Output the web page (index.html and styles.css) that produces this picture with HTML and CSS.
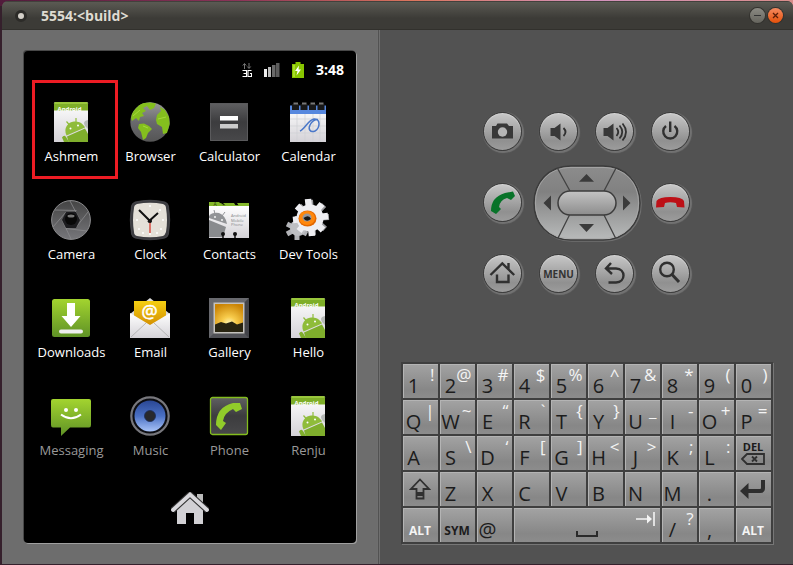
FILE: index.html
```html
<!DOCTYPE html>
<html lang="en">
<head>
<meta charset="utf-8">
<title>5554:&lt;build&gt;</title>
<link rel="stylesheet" href="styles.css">
</head>
<body>
<svg class="defs" aria-hidden="true">
  <defs>
    <linearGradient id="green" x1="0" y1="0" x2="0" y2="1"><stop offset="0" stop-color="#a3d42f"/><stop offset="1" stop-color="#5f9226"/></linearGradient>
    <linearGradient id="paper" x1="0" y1="0" x2="0" y2="1"><stop offset="0" stop-color="#fff"/><stop offset="1" stop-color="#d4d2d7"/></linearGradient>
    <linearGradient id="dark" x1="0" y1="0" x2="0" y2="1"><stop offset="0" stop-color="#606062"/><stop offset=".5" stop-color="#3c3c3e"/><stop offset="1" stop-color="#48484a"/></linearGradient>
    <linearGradient id="globe" x1="0" y1="0" x2="0" y2="1"><stop offset="0" stop-color="#999"/><stop offset=".5" stop-color="#69696d"/><stop offset="1" stop-color="#555"/></linearGradient>
    <linearGradient id="lens" x1="0" y1="0" x2="0" y2="1"><stop offset="0" stop-color="#444"/><stop offset="1" stop-color="#77777b"/></linearGradient>
    <linearGradient id="gold" x1="0" y1="0" x2="0" y2="1"><stop offset="0" stop-color="#f5cf12"/><stop offset="1" stop-color="#d18b00"/></linearGradient>
    <radialGradient id="sunset" cx=".5" cy=".72" r=".75"><stop offset="0" stop-color="#fffbc0"/><stop offset=".35" stop-color="#f8cc4c"/><stop offset="1" stop-color="#c98304"/></radialGradient>
    <linearGradient id="cone" x1="0" y1="0" x2="0" y2="1"><stop offset="0" stop-color="#2a4794"/><stop offset=".5" stop-color="#4a70c4"/><stop offset="1" stop-color="#a9c4f8"/></linearGradient>
    <linearGradient id="pad" x1="0" y1="0" x2="0" y2="1"><stop offset="0" stop-color="#8c8c8c"/><stop offset=".35" stop-color="#818181"/><stop offset="1" stop-color="#b9bbbb"/></linearGradient>
    <linearGradient id="pill" x1="0" y1="0" x2="0" y2="1"><stop offset="0" stop-color="#c4c4c4"/><stop offset="1" stop-color="#8c8c8c"/></linearGradient>
    <symbol id="doc" viewBox="0 0 40 40">
      <path d="M3 1.500Q3 0 4.500 0H35.500Q37 0 37 1.500V40H3Z" fill="url(#paper)"/>
      <path d="M3 1.500Q3 0 4.500 0H35.500Q37 0 37 1.500V8.500H3Z" fill="#7eae28"/>
      <path d="M4 1H36" stroke="#b4df50"/>
      <text x="6.500" y="8.500" font-size="6" font-weight="700" fill="#fff">Android</text>
      <path d="M37 18Q31 19 34 24L37 27Z" fill="#b6b9b6"/>
      <path d="M15.500 33.500C12 26 17 20 23 19.500C29 19 32 22 34 25.500Z" fill="#8fbc3a"/>
      <path d="M18.500 23L15.500 19.500M25 21V16" stroke="#8fbc3a" stroke-width="1.200"/>
      <circle cx="19.500" cy="26.500" r="1" fill="#fff"/><circle cx="27" cy="23.500" r="1" fill="#fff"/>
      <path d="M16 34.500L34 26.500L37 32V40H17.500Z" fill="#7fae2c"/>
      <path d="M11 35.500Q13 32.500 15 35L18 40H13Z" fill="#7fae2c"/>
    </symbol>
  </defs>
</svg>

<main class="window">
  <header class="titlebar">
    <span class="dot"></span>
    <h1 class="title">5554:&lt;build&gt;</h1>
    <div class="controls">
      <button class="control" aria-label="Minimize"><svg viewBox="0 0 15 15"><path d="M4 7.500H11" stroke="#333"/></svg></button>
      <button class="control close" aria-label="Close"><svg viewBox="0 0 15 15"><path d="M5 5L10 10M10 5L5 10" stroke="#5a1d08" stroke-width="1.300"/></svg></button>
    </div>
  </header>

  <div class="emulator">
    <section class="device" aria-label="Device">
      <div class="screen">
        <div class="status">
          <svg width="10" height="16" viewBox="0 0 10 16" aria-label="3G network"><path d="M2.500 7V2M.8 3.500L2.500 1.500L4.200 3.500M7 1V6M5.300 4.500L7 6.500L8.700 4.500" stroke="#777" fill="none"/><path d="M.5 8.500H4.500V14.500H.5M1.500 11.500H4.500M9.500 8.500H6V14.500H9.500V11.500H8" stroke="#fff" fill="none" stroke-width="1.100"/></svg>
          <svg width="16" height="16" viewBox="0 0 16 16" aria-label="Signal"><path d="M0 7H3V15H0Z" fill="#eee"/><path d="M4 5H7V15H4Z" fill="#bbb"/><path d="M8 3H11.500V15H8Z" fill="#6a6a6a"/><path d="M12 1H15.500V15H12Z" fill="#5c5c5c"/></svg>
          <svg width="12" height="16" viewBox="0 0 12 16" aria-label="Charging"><path d="M3.500 0H8.500V2H12V16H0V2H3.500Z" fill="#88c500"/><path d="M1 3H3V15H1Z" fill="#a7dd28"/><path d="M7 3.500L3 9H5.500L4.500 13.500L9 7.500H6.500Z" fill="#fff"/></svg>
          <time class="clock">3:48</time>
        </div>

        <nav class="apps" aria-label="Applications">
          <button class="app marked"><svg viewBox="0 0 40 40"><use href="#doc"/></svg>Ashmem</button>
          <button class="app"><svg viewBox="0 0 40 40"><circle cx="20" cy="20" r="19.700" fill="url(#globe)"/><path d="M2 12C5 6 10 2 14 1L20 .5L26 1.500L24 6L20 8L17 4L13 6L16 9L12 11L14 14L10 15L9 19L6 16L2 19L1 16ZM9 22L14 21.500L19 24L22 27L18 31L16 36L13 38L11 30L8 26ZM27 13L31 9L30 5L35 8L39 15L39.700 22L37 31L33 32L32 25L27 22L26 18Z" fill="#84bf1e"/><path d="M3 14L10 8M28 17L36 15M13 24L18 26" stroke="#a4da3a" stroke-width="1"/></svg>Browser</button>
          <button class="app"><svg viewBox="0 0 40 40"><path d="M1 1H39V39H1Z" fill="url(#dark)"/><path d="M1.500 1.500H38.500V38.500H1.500Z" fill="none" stroke="#5a5a5c"/><path d="M11 14H29V18.500H11Z" fill="#fff"/><path d="M11 22H29V26.500H11Z" fill="#ccc"/></svg>Calculator</button>
          <button class="app"><svg viewBox="0 0 40 40"><path d="M2 4H38V40H2Z" fill="url(#paper)"/><path d="M2 17H38M2 24H38M2 31H38M9 12V40M17 12V40M25 12V40M32 12V40" stroke="#cfd0d4" stroke-width=".7"/><path d="M2 3.500H38V12H2Z" fill="#5788de"/><path d="M4 2H11V8H4ZM12.500 2H19.500V8H12.500ZM21 2H28V8H21ZM29.500 2H36.500V8H29.500Z" fill="#181818"/><path d="M5.500 1.500H10M14 1.500H18.500M22.500 1.500H27M31 1.500H35.500" stroke="#777" stroke-width="2"/><path d="M12 29C17 27 20 18 26 17C33 16.500 32 26 27 29C22 31 20 27 22 23C23.500 20 26 17.500 30 17.500" fill="none" stroke="#4b78c9" stroke-width="1.500"/></svg>Calendar</button>

          <button class="app"><svg viewBox="0 0 40 40"><circle cx="20" cy="20" r="19.400" fill="url(#lens)" stroke="#8b8b8d"/><path d="M25.500 10.500L4 10M29 20L19 1M24.500 28L37 12M15 28.500L36 31M11 20L20 39M15 12L2 27" stroke="#8a8a8d" stroke-width=".8"/><path d="M15 12H25L29 20L25 28H15L11 20Z" fill="#1c1c1f"/><circle cx="20" cy="19" r="6" fill="#080808"/><ellipse cx="20" cy="16" rx="3.500" ry="1.500" fill="#777"/></svg>Camera</button>
          <button class="app"><svg viewBox="0 0 40 40"><path d="M5 2Q20-1.500 35 2Q38 3 38.500 6Q41 20 38.500 34Q38 37 35 38Q20 41.500 5 38Q2 37 1.500 34Q-1 20 1.500 6Q2 3 5 2Z" fill="#3c3c40" stroke="#58585c" stroke-width=".6"/><path d="M7 4Q20 1.500 33 4Q36 5 36 8Q38 20 36 32Q35 35 33 36Q20 38.500 7 36Q4 35 4 32Q2 20 4 8Q4 5 7 4Z" fill="#e4e0d8"/><g fill="#fff"><circle cx="20" cy="6" r="1"/><circle cx="33" cy="20" r="1"/><circle cx="7" cy="20" r="1"/><circle cx="20" cy="34" r="1"/><circle cx="30" cy="10" r="1"/><circle cx="31" cy="29" r="1"/><circle cx="9" cy="29" r="1"/><circle cx="13" cy="33" r="1"/><circle cx="27" cy="33" r="1"/></g><path d="M20 20V33" stroke="#d73c31" stroke-width="1.300"/><path d="M9 10L21 22M18 22L28 13" stroke="#111" stroke-width="2"/><circle cx="20" cy="21" r="2" fill="#111"/></svg>Clock</button>
          <button class="app"><svg viewBox="0 0 40 40"><path d="M0 3H12L15 5H40V12H0Z" fill="#6f9d22"/><path d="M0 2H10L14 6H0ZM14 3H25L27 6H17ZM28 3H40V6H30Z" fill="#84b82a"/><text x="4.500" y="6" font-size="5" fill="#26380c">A</text><path d="M0 6H40V38H0Z" fill="url(#paper)"/><path d="M0 16Q3 12 10 13Q17 16 18 24L0 18Z" fill="#929497"/><path d="M6 14L5 10M13 16L16 12" stroke="#929497"/><circle cx="6" cy="17" r=".9" fill="#fff"/><circle cx="13" cy="20" r=".9" fill="#fff"/><path d="M0 20L17 27L14 37H0Z" fill="#898b8e"/><g font-size="4" fill="#85868a"><text x="22" y="17">Android</text><text x="22" y="21.500">Mobile</text><text x="22" y="26">Phone</text></g><circle cx="14" cy="34" r="2" fill="#111"/><circle cx="26" cy="34" r="2" fill="#111"/><path d="M14 34V38M26 34V38" stroke="#111" stroke-width="1.500"/></svg>Contacts</button>
          <button class="app"><svg viewBox="0 0 40 40"><g stroke="#b2b3b7" stroke-width="5"><path d="M9 18V40M-1 24L19 34M-1 34L19 23"/></g><circle cx="10" cy="28" r="8" fill="#bebfc3"/><g stroke="#9a9b9f" stroke-width="6"><path d="M22 0L25 35M7 19L41 17M11 6L37 29M12 30L36 5"/></g><g stroke="#eeeef2" stroke-width="6.500"><path d="M20-1L24 36M5 20L40 16M9 6L35 30M11 31L34 4"/></g><circle cx="22" cy="18" r="13.500" fill="#eeeef2"/><ellipse cx="19.500" cy="18.500" rx="9" ry="8" fill="#e26700"/><ellipse cx="19" cy="18" rx="8" ry="7" fill="#ff870c"/><ellipse cx="19" cy="17.500" rx="4.500" ry="4" fill="#96979c"/><path d="M15.500 18Q21 14 23 19Q18 23 15.500 18Z" fill="#171717"/></svg>Dev Tools</button>

          <button class="app"><svg viewBox="0 0 40 40"><rect x="1" y="1" width="38" height="38" rx="2.500" fill="url(#green)"/><path d="M16 5H24V18H29.500L20 29L10.500 18H16Z" fill="#fff"/><rect x="8" y="31.500" width="24" height="4" rx="2" fill="#eee"/></svg>Downloads</button>
          <button class="app"><svg viewBox="0 0 40 40"><path d="M0 16L20 0L40 16V40H0Z" fill="#ddd"/><path d="M4 3H36V18L20 29L4 18Z" fill="url(#gold)"/><text x="11.500" y="20" font-size="18" fill="#fff" stroke="#fff" stroke-width=".5">@</text><path d="M0 15L20 27L40 15V40H0Z" fill="url(#paper)"/><path d="M1 39L16 25M39 39L24 25" stroke="#aaa" stroke-width=".8"/></svg>Email</button>
          <button class="app"><svg viewBox="0 0 40 40"><path d="M0 0H40V40H0Z" fill="#515257"/><path d="M0 0H40L35 5H5L5 35L0 40Z" fill="#68696e"/><path d="M40 0V40L35 35V5Z" fill="#424348"/><path d="M4.500 4.500H35.500V35.500H4.500Z" fill="#c4c2bd"/><path d="M6 6H34V34H6Z" fill="url(#sunset)"/><path d="M6 26.500L12 24L17 25.500L23 23.500L28 26.500L34 24.500V34H6Z" fill="#282411"/></svg>Gallery</button>
          <button class="app"><svg viewBox="0 0 40 40"><use href="#doc"/></svg>Hello</button>

          <button class="app faded"><svg viewBox="0 0 40 40"><path d="M2 3H38Q40 3 40 5V29Q40 31.500 38 31.500H19L10 40V31.500H2Q0 31.500 0 29V5Q0 3 2 3Z" fill="url(#green)"/><circle cx="15" cy="14" r="2" fill="#fff"/><circle cx="25" cy="14" r="2" fill="#fff"/><path d="M10 18.500Q20 26 30 18.500" fill="none" stroke="#fff" stroke-width="2"/></svg>Messaging</button>
          <button class="app faded"><svg viewBox="0 0 40 40"><circle cx="20" cy="20" r="18.700" fill="#0c0d12" stroke="#77777c" stroke-width="2.200"/><circle cx="20" cy="20" r="15.500" fill="url(#cone)"/><circle cx="20" cy="20" r="5.500" fill="#28292d" stroke="#1b2c58" stroke-width=".8"/></svg>Music</button>
          <button class="app faded"><svg viewBox="0 0 40 40"><rect x="1.500" y="1.500" width="37" height="37" rx="2" fill="url(#dark)" stroke="#83bd1e" stroke-width="1.300"/><path d="M24 7L31 7L33 13L27 16L24 13Q15 17 14 25L17 27L12 34L7 29Q7 11 24 7Z" fill="#91cb2a"/></svg>Phone</button>
          <button class="app faded"><svg viewBox="0 0 40 40"><use href="#doc"/></svg>Renju</button>
        </nav>

        <button class="home" aria-label="Home"><svg width="38" height="33" viewBox="0 0 38 33"><path d="M26 2H32V12H26Z" fill="#bbb"/><path d="M6 17L19 5L32 17V32H23V21H15V32H6Z" fill="#d1d0d4"/><path d="M1.500 18.500L19 2.500L36.500 18.500" fill="none" stroke="#333" stroke-width="6"/><path d="M2 18L19 2.500L36 18" fill="none" stroke="#d9d8dc" stroke-width="3.800" stroke-linecap="round"/></svg></button>
      </div>
    </section>

    <section class="input" aria-label="Controls">
      <div class="hardware">
        <button class="round" aria-label="Camera"><svg viewBox="0 0 39 39"><path d="M9 14H13L14.500 11.500H24L26 14H30V26.500H9Z" fill="#383838"/><circle cx="19.500" cy="20" r="4.700" fill="#b5b5b5"/></svg></button>
        <button class="round" aria-label="Volume down"><svg viewBox="0 0 39 39"><path d="M11.500 16H15.500L21.500 11.500V28.500L15.500 24H11.500Z" fill="#383838"/><path d="M24.500 16Q28.500 20 24.500 24" class="line"/></svg></button>
        <button class="round" aria-label="Volume up"><svg viewBox="0 0 39 39"><path d="M8.500 16H12.500L18.500 11.500V28.500L12.500 24H8.500Z" fill="#383838"/><path d="M21.500 16Q25 20 21.500 24M24.500 13.500Q30 20 24.500 26.500M27.500 11.500Q34.500 20 27.500 28.500" class="line"/></svg></button>
        <button class="round" aria-label="Power"><svg viewBox="0 0 39 39"><path d="M15 14A7 7 0 1 0 23.500 14M19.200 9.500V20" class="line thick"/></svg></button>

        <button class="round" aria-label="Call"><svg viewBox="0 0 39 39"><path d="M22 10L30 8.500L32 13L28 17L24 15Q17 17 16 24L18 26L13 31L8 28Q8 14 22 10Z" fill="#087329"/></svg></button>
        <div class="dpad" role="group" aria-label="Directional pad">
          <svg class="dpad-base" viewBox="0 0 108 76" aria-hidden="true"><path d="M38 1H70C93 1 107 18 107 38S93 75 70 75H38C15 75 1 58 1 38S15 1 38 1Z" fill="url(#pad)" stroke="#3b3b3b" stroke-width="1.500"/><path d="M38 2.500H70C92 2.500 105.500 18 105.500 38S92 73.500 70 73.500H38C16 73.500 2.500 58 2.500 38S16 2.500 38 2.500Z" fill="none" stroke="#aaa" stroke-width=".8"/><path d="M24.300 3L37 26M83 3L71 26M36.500 50L25 73M71 50L82.500 73" stroke="#424242" stroke-width="1.300"/><rect x="25" y="26" width="58" height="24" rx="12" fill="url(#pill)" stroke="#3c3c3c" stroke-width="1.500"/><path d="M46 16.700L53.500 9L61 16.700ZM46 59H61L53.500 67ZM10.500 38L18 30.500V45.500ZM90 30.500V45.500L97.500 38Z" fill="#3b3b3b"/></svg>
          <button class="up" aria-label="Up"></button><button class="left" aria-label="Left"></button><button class="ok" aria-label="Select"></button><button class="right" aria-label="Right"></button><button class="down" aria-label="Down"></button>
        </div>
        <button class="round" aria-label="End call"><svg viewBox="0 0 39 39"><path d="M5 24.500L5.500 18Q8 14 19.500 14Q31 14 33 18L33.500 24.500L26 24L25 20Q19 18.500 14 20L13 24Z" fill="#bd1017"/></svg></button>

        <button class="round" aria-label="Home"><svg viewBox="0 0 39 39"><path d="M7.500 21L19.300 9.500L31.200 21M25.500 9V15M14 20.500V28H25.500V20.500" class="line thick"/></svg></button>
        <button class="round">MENU</button>
        <button class="round" aria-label="Back"><svg viewBox="0 0 39 39"><path d="M16 9L11 14.500L17 20M11.500 14.500H21C31 15 31 28 21 28.500H13.500" class="line thick"/></svg></button>
        <button class="round" aria-label="Search"><svg viewBox="0 0 39 39"><circle cx="16" cy="15.500" r="6.800" class="line thick"/><path d="M21 20.500L28 28" class="line heavy"/></svg></button>
      </div>

      <div class="keyboard">
        <button class="key"><b>1</b><i>!</i></button><button class="key"><b>2</b><i>@</i></button><button class="key"><b>3</b><i>#</i></button><button class="key"><b>4</b><i>$</i></button><button class="key"><b>5</b><i>%</i></button><button class="key"><b>6</b><i>^</i></button><button class="key"><b>7</b><i>&amp;</i></button><button class="key"><b>8</b><i>*</i></button><button class="key"><b>9</b><i>(</i></button><button class="key"><b>0</b><i>)</i></button>
        <button class="key"><b>Q</b><i>|</i></button><button class="key"><b>W</b><i>~</i></button><button class="key"><b>E</b><i>“</i></button><button class="key"><b>R</b><i>`</i></button><button class="key"><b>T</b><i>{</i></button><button class="key"><b>Y</b><i>}</i></button><button class="key"><b>U</b><i>_</i></button><button class="key"><b>I</b><i>-</i></button><button class="key"><b>O</b><i>+</i></button><button class="key"><b>P</b><i>=</i></button>
        <button class="key"><b>A</b></button><button class="key"><b>S</b><i>\</i></button><button class="key"><b>D</b><i>‘</i></button><button class="key"><b>F</b><i>[</i></button><button class="key"><b>G</b><i>]</i></button><button class="key"><b>H</b><i>&lt;</i></button><button class="key"><b>J</b><i>&gt;</i></button><button class="key"><b>K</b><i>;</i></button><button class="key"><b>L</b><i>:</i></button>
        <button class="key delete">DEL<svg width="24" height="12" viewBox="0 0 24 12"><path d="M1 6L6 1H23V11H6Z" class="line"/><path d="M11 3.500L16 8.500M16 3.500L11 8.500" class="line"/></svg></button>
        <button class="key icon" aria-label="Shift"><svg width="22" height="22" viewBox="0 0 22 22"><path d="M11 1.500L20 11H14.500V15H7.500V11H2ZM7.500 17H14.500V20.500H7.500Z" class="line"/></svg></button>
        <button class="key"><b>Z</b></button><button class="key"><b>X</b></button><button class="key"><b>C</b></button><button class="key"><b>V</b></button><button class="key"><b>B</b></button><button class="key"><b>N</b></button><button class="key"><b>M</b></button><button class="key"><b>.</b></button>
        <button class="key icon" aria-label="Enter"><svg width="26" height="20" viewBox="0 0 26 20"><path d="M7 12H20Q23 12 23 9V1" fill="none" stroke="#2e2e2e" stroke-width="4"/><path d="M0 12L8.500 4V20Z" fill="#2e2e2e"/></svg></button>
        <button class="key word light">ALT</button><button class="key word">SYM</button><button class="key"><b>@</b></button>
        <button class="key space" aria-label="Space"><svg class="bar" width="22" height="6" viewBox="0 0 22 6"><path d="M1 0V5H21V0" fill="none" stroke="#2a2a2a" stroke-width="2"/></svg><svg class="tab" width="19" height="14" viewBox="0 0 19 14"><path d="M0 7H14M18 0V14" stroke="#f4f4f4" stroke-width="1.600"/><path d="M11 2.500L16 7L11 11.500Z" fill="#f4f4f4"/></svg></button>
        <button class="key"><b>/</b><i>?</i></button><button class="key"><b>,</b></button><button class="key word light">ALT</button>
      </div>
    </section>
  </div>
</main>
</body>
</html>
```
FILE: styles.css
```css
* { box-sizing: border-box; }

body {
  margin: 0;
  min-height: 100vh;
  display: flex;
  padding: 1px 0 1px 2px;
  background: linear-gradient(90deg, #511b3b, #8b3458 30%, #dc765d 52%, #d393bd 75%, #d98d8a) top / 100% 6px no-repeat, #35202c;
  font-family: "Open Sans", "Noto Sans", sans-serif;
}

button {
  margin: 0;
  padding: 0;
  border: 0;
  background: none;
  color: inherit;
  font: inherit;
}

svg { display: block; }

.defs {
  position: absolute;
  width: 0;
  height: 0;
}

.window {
  flex: 1;
  display: flex;
  flex-direction: column;
  border-radius: 6px 6px 0 0;
  overflow: hidden;
  background: #525252;
}

/* Title bar */
.titlebar {
  height: 29px;
  display: flex;
  align-items: center;
  gap: 14px;
  padding: 0 10px 0 13px;
  background: linear-gradient(#5b5a53, #3c3b37 60%);
  border-top: 1px solid #42413c;
  border-bottom: 1px solid #32312d;
}

.dot {
  width: 12px;
  height: 12px;
  border: 3px solid #2c2b28;
  border-radius: 50%;
  background: #d4d0c9;
}

.title {
  flex: 1;
  margin: 0;
  color: #dfdbd2;
  font-size: 14px;
  line-height: 20px;
}

.controls {
  display: flex;
  gap: 3px;
}

.control {
  width: 15px;
  height: 15px;
  border-radius: 50%;
  background: linear-gradient(#8b8a83, #65645d);
  box-shadow: 0 0 0 1px #33322e;
}

.control.close { background: linear-gradient(#f58a61, #e55009); }

.emulator {
  flex: 1;
  display: grid;
  grid-template-columns: 375fr 416fr;
}

/* Phone screen */
.device {
  padding: 21px 21px 20px 22px;
  background: #6d6d6d;
}

.screen {
  padding: 0 8px 18px;
  border-radius: 4px;
  background: #000;
  color: #fff;
  box-shadow: 1px 1px #a0a0a0, -1px -1px #484848;
}

.status {
  height: 37px;
  display: flex;
  align-items: center;
  justify-content: flex-end;
  gap: 12px;
  padding-right: 4px;
}

.clock {
  font-size: 14px;
  font-weight: 700;
}

.apps {
  display: grid;
  grid-template-columns: repeat(4, 1fr);
  grid-auto-rows: 98px;
}

.app {
  position: relative;
  display: flex;
  flex-direction: column;
  align-items: center;
  gap: 5px;
  padding-top: 14px;
  font-size: 13px;
  line-height: 18px;
  white-space: nowrap;
}

.app svg {
  width: 40px;
  height: 40px;
  margin-right: 1px;
  overflow: visible;
}

.app.faded { color: #999; }

/* Highlight frame laid over the first app */
.app.marked::after {
  content: "";
  position: absolute;
  inset: -8px -7px 7px 0;
  border: 3px solid #ed1c24;
}

.home {
  display: block;
  margin: 12px auto 0;
}

/* Hardware buttons */
.input {
  display: flex;
  flex-direction: column;
  align-items: center;
  gap: 53px;
  padding-top: 66px;
  border-left: 3px double #6f6f6f;
}

.hardware {
  display: grid;
  grid-template-columns: repeat(4, 56px);
  grid-auto-rows: 71px;
  place-items: center;
}

.round {
  width: 39px;
  height: 39px;
  border: 1px solid #3b3b3b;
  border-radius: 50%;
  background: linear-gradient(#c8c8c8, #909090 75%, #9c9c9c);
  box-shadow: 1px 1px 1px 1px #737373, inset 0 1px 1px #d2d2d2;
  color: #333;
  font-size: 10px;
  font-weight: 700;
}

.round svg { margin: -1px; }

.line {
  fill: none;
  stroke: #303030;
  stroke-width: 1.8;
}

.line.thick { stroke-width: 2.4; }
.line.heavy { stroke-width: 3; }

.dpad {
  grid-column: span 2;
  width: 108px;
  height: 76px;
  display: grid;
  grid-template-columns: 25px 1fr 25px;
  grid-template-rows: 25px 1fr 25px;
}

.dpad-base { grid-area: 1 / 1 / -1 / -1; filter: drop-shadow(1px 1px #707070); }
.up { grid-area: 1 / 2; }
.left { grid-area: 2 / 1; }
.ok { grid-area: 2 / 2; }
.right { grid-area: 2 / 3; }
.down { grid-area: 3 / 2; }

/* Keyboard */
.keyboard {
  display: grid;
  grid-template-columns: repeat(10, 35px);
  grid-auto-rows: 34px;
  gap: 2px;
  padding: 2px;
  background: #3f3f3f;
  box-shadow: 1px 1px #777;
}

.key {
  display: grid;
  grid-template-columns: 22px 1fr;
  background: linear-gradient(#a3a3a3, #878787 75%, #8c8c8c);
  box-shadow: inset 1px 1px #b4b4b4;
  color: #1c1c1c;
}

.key b {
  grid-area: 1 / 1;
  align-self: end;
  justify-self: center;
  padding-bottom: 2px;
  font-size: 20px;
  font-weight: 400;
  line-height: 20px;
}

/* The shifted symbol may reach over the main letter's column */
.key i {
  grid-area: 1 / 1 / 2 / -1;
  align-self: start;
  justify-self: end;
  padding: 2px 3px 0 0;
  color: #f4f4f4;
  font-size: 17px;
  font-style: normal;
  line-height: 17px;
}

.key.icon {
  grid-template-columns: 1fr;
  place-items: center;
}

.key.delete {
  display: flex;
  flex-direction: column;
  align-items: center;
  justify-content: center;
  gap: 1px;
  font-size: 11px;
  font-weight: 700;
  line-height: 11px;
}

.key.word {
  display: block;
  padding-top: 12px;
  font-size: 12px;
  font-weight: 700;
  line-height: 16px;
}

.key.light { color: #f4f4f4; }

.key.space {
  grid-column: span 4;
  grid-template-columns: 1fr 22px 1fr;
}

.space .bar {
  grid-area: 1 / 2;
  align-self: end;
  margin-bottom: 5px;
}

.space .tab {
  grid-area: 1 / 3;
  justify-self: end;
  margin: 4px 5px 0 0;
}
```
